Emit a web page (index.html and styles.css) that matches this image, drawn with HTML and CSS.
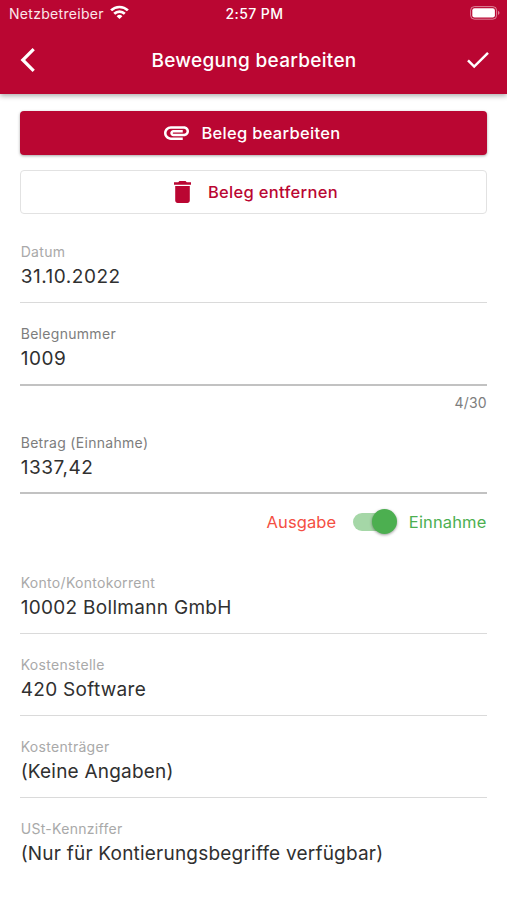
FILE: index.html
```html
<!DOCTYPE html>
<html lang="de">
<head>
<meta charset="utf-8">
<title>Bewegung bearbeiten</title>
<link rel="stylesheet" href="styles.css">
</head>
<body>
<header class="header">
  <div class="status">
    <div class="carrier"><span>Netzbetreiber</span>
      <svg class="wifi" viewBox="0 0 18 14" fill="none" stroke="#fff" stroke-width="2.6"><path d="M.9 5.2a11.6 11.6 0 0 1 16.2 0M3.9 8.5a7.3 7.3 0 0 1 10.2 0"/><path d="M9 13.6 6.2 10.8a4 4 0 0 1 5.6 0z" fill="#fff" stroke="none"/></svg>
    </div>
    <span class="time">2:57 PM</span>
    <svg class="battery" viewBox="0 0 30 14"><rect x=".6" y=".6" width="26" height="12.6" rx="3.8" fill="none" stroke="#fff" stroke-opacity=".5"/><rect x="2.3" y="2.3" width="22.6" height="9.2" rx="2.2" fill="#fff"/><path d="M28 4.8c2 .8 2 3.4 0 4.2z" fill="#fff" fill-opacity=".5"/></svg>
  </div>
  <div class="bar">
    <svg class="back" viewBox="0 0 16 26" fill="none" stroke="#fff" stroke-width="3.2"><path d="M13.700 2.200 2.800 13l10.900 10.800"/></svg>
    <h1 class="title">Bewegung bearbeiten</h1>
    <svg class="check" viewBox="0 0 22 18" fill="none" stroke="#fff" stroke-width="2.5"><path d="M1 9.400 7.200 15.600 21 1.800"/></svg>
  </div>
</header>
<main class="form">
  <button class="btn primary">
    <svg class="clip" viewBox="2 7 20 11" fill="#fff"><path d="M2 12.500C2 9.460 4.460 7 7.500 7H18c2.210 0 4 1.790 4 4s-1.790 4-4 4H9.500C8.120 15 7 13.880 7 12.500S8.120 10 9.500 10H17v2H9.410c-.55 0-.55 1 0 1H18c1.100 0 2-.9 2-2s-.9-2-2-2H7.500C5.570 9 4 10.570 4 12.500S5.570 16 7.500 16H17v2H7.500C4.460 18 2 15.540 2 12.500z"/></svg>
    <span>Beleg bearbeiten</span>
  </button>
  <button class="btn outline">
    <svg class="trash" viewBox="5 3 14 18" preserveAspectRatio="none" fill="#ba0632"><path d="M6 19c0 1.100.9 2 2 2h8c1.100 0 2-.9 2-2V7H6v12zM19 4h-3.500l-1-1h-5l-1 1H5v2h14V4z"/></svg>
    <span>Beleg entfernen</span>
  </button>
  <section class="fields">
    <div class="field muted"><label>Datum</label><p class="numeric">31.10.2022</p></div>
    <div class="field active counted"><label>Belegnummer</label><p class="numeric">1009</p></div>
    <div class="counter">4/30</div>
    <div class="field active"><label>Betrag (Einnahme)</label><p class="numeric">1337,42</p></div>
    <div class="kind"><span class="out">Ausgabe</span><span class="switch"><i class="knob"></i></span><span class="in">Einnahme</span></div>
    <div class="field muted"><label>Konto/Kontokorrent</label><p>10002 Bollmann GmbH</p></div>
    <div class="field muted"><label>Kostenstelle</label><p>420 Software</p></div>
    <div class="field muted"><label>Kostenträger</label><p class="words">(Keine Angaben)</p></div>
    <div class="field muted last"><label>USt-Kennziffer</label><p class="words">(Nur für Kontierungsbegriffe verfügbar)</p></div>
  </section>
</main>
</body>
</html>
```
FILE: styles.css
```css
* { box-sizing: border-box; }
body { margin: 0; height: 900px; overflow: hidden; background: #fff; color: #303030; font-family: Inter, "Liberation Sans", sans-serif; }
.header { position: relative; height: 94px; background: #ba0632; color: #fff; box-shadow: 0 2px 5px rgba(0,0,0,.32); }
.status { display: grid; grid-template-columns: 1fr auto 1fr; align-items: center; height: 27px; padding: 0 7px 0 9px; font-size: 14px; line-height: 27px; }
.carrier { display: flex; align-items: center; gap: 6px; letter-spacing: .3px; color: #fbe6eb; }
.wifi { width: 19px; height: 14.5px; margin-top: -2px; }
.time { font-weight: 550; font-size: 14px; letter-spacing: .4px; }
.battery { width: 30px; height: 14px; justify-self: end; margin-top: -1px; }
.bar { display: grid; grid-template-columns: 40px 1fr 40px; align-items: center; height: 66px; padding: 0 18px 0 19px; }
.back { width: 16px; height: 26px; margin-left: 1px; }
.title { margin: 0; text-align: center; font-size: 19px; font-weight: 550; letter-spacing: .3px; }
.check { width: 22px; height: 18px; justify-self: end; }
.form { padding: 17px 19.6px 0 20.4px; }
.btn { display: flex; align-items: center; justify-content: center; width: 100%; height: 44px; border: 0; border-radius: 4px; padding: 0; font: 550 16.5px Inter, "Liberation Sans", sans-serif; letter-spacing: .3px; }
.primary { gap: 12px; padding: 0 3px 1px 0; background: #ba0632; color: #fff; box-shadow: 0 1px 3px rgba(0,0,0,.35); }
.outline { gap: 17px; margin-top: 15px; padding: 0 0 1px 4px; background: #fff; color: #ba0632; border: 1px solid #e2e2e2; }
.clip { width: 25px; height: 14px; }
.trash { width: 17px; height: 22px; }
.fields { padding-top: 26px; }
.field { height: 63px; margin-bottom: 19px; border-bottom: 1px solid #dadada; }
.field label { display: block; padding-left: .3px; font-size: 14px; line-height: 24px; letter-spacing: .3px; color: #7d7d7d; }
.field.muted label { color: #a9a9a9; }
.field p { margin: 0; padding-left: .3px; font-size: 19px; line-height: 25px; letter-spacing: .3px; white-space: nowrap; }
.field .numeric { letter-spacing: .53px; }
.field .words { letter-spacing: .21px; }
.field.active { border-bottom: 2px solid #c2c2c2; }
.field.counted { height: 64px; margin-bottom: 18px; }
.field.last { border: 0; }
.counter { margin-top: -13px; height: 40px; padding-right: .6px; text-align: right; font-size: 14px; line-height: 24px; letter-spacing: .2px; color: #7d7d7d; }
.kind { display: flex; justify-content: flex-end; align-items: center; height: 30px; margin: -6px 0 34px; padding-right: 1px; font-size: 16.5px; line-height: 30px; letter-spacing: .13px; }
.out { color: #f44f43; }
.in { color: #4caf50; }
.switch { position: relative; width: 42px; height: 18px; margin: 0 13.5px 0 17px; border-radius: 9px; background: #a5d7a7; }
.knob { position: absolute; right: -2px; top: -4px; width: 25px; height: 25px; border-radius: 50%; background: #4caf50; box-shadow: 0 1px 3px rgba(0,0,0,.4); }
```
